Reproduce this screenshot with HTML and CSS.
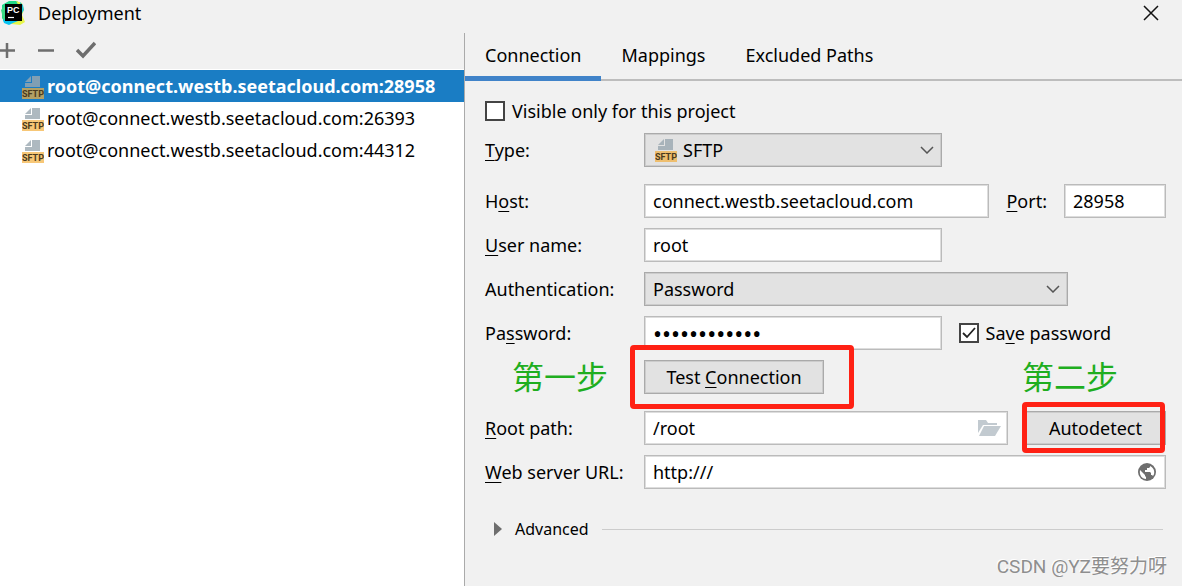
FILE: index.html
```html
<!DOCTYPE html>
<html lang="en">
<head>
    <meta charset="UTF-8">
    <meta name="viewport" content="width=device-width, initial-scale=1.0">
    <title>Deployment</title>
    <link rel="stylesheet" href="styles.css">
</head>
<body>
    <header class="title-bar">
        <svg class="app-icon" viewBox="0 0 24 24">
            <path d="M1 4L8 0H16L20 4L12 16L4 22L1 17Z" fill="#21d789"/>
            <path d="M0 9L6 3V21L3 21Z" fill="#3ddc84"/>
            <path d="M15 0L21 2L23 9L21 14L24 21L19 24L11 23L7 20L18 5Z" fill="#e6f54a"/>
            <path d="M19 1L22 4L23 9L20 14Z" fill="#21c8d8"/>
            <path d="M2 19L8 17L17 20L12 22L8 24L3 22Z" fill="#07c3f2"/>
            <rect x="4" y="3" width="17" height="17" fill="#000"/>
            <text x="6" y="12" class="app-icon-text">PC</text>
            <path d="M7 16.500H13" stroke="#fff" stroke-width="1.200"/>
        </svg>
        <h1>Deployment</h1>
        <button class="close-btn" aria-label="Close">
            <svg width="16" height="16" viewBox="0 0 16 16"><path d="M1 1L15 15M15 1L1 15" stroke="#111" stroke-width="1.500"/></svg>
        </button>
    </header>

    <main class="dialog">
        <aside class="sidebar">
            <div class="toolbar">
                <button aria-label="Add"><svg width="20" height="20" viewBox="0 0 20 20"><path d="M11 3V18M3 10.500H19" stroke="#6e6e6e" stroke-width="2.500"/></svg></button>
                <button aria-label="Remove"><svg width="20" height="20" viewBox="0 0 20 20"><path d="M2 10.500H18" stroke="#6e6e6e" stroke-width="2.500"/></svg></button>
                <button aria-label="Use as default"><svg width="20" height="20" viewBox="0 0 20 20"><path d="M1 10L7 16L19 3" fill="none" stroke="#6e6e6e" stroke-width="3.500"/></svg></button>
            </div>
            <ul class="server-list">
                <li class="selected">
                    <svg class="sftp-icon" viewBox="0 0 22 23"><path d="M3 6L9 0V6Z"/><path d="M10 0H18V11H3V7H10Z"/><rect y="12" width="22" height="11"/><text x="11" y="21">SFTP</text></svg>
                    root@connect.westb.seetacloud.com:28958
                </li>
                <li>
                    <svg class="sftp-icon" viewBox="0 0 22 23"><path d="M3 6L9 0V6Z"/><path d="M10 0H18V11H3V7H10Z"/><rect y="12" width="22" height="11"/><text x="11" y="21">SFTP</text></svg>
                    root@connect.westb.seetacloud.com:26393
                </li>
                <li>
                    <svg class="sftp-icon" viewBox="0 0 22 23"><path d="M3 6L9 0V6Z"/><path d="M10 0H18V11H3V7H10Z"/><rect y="12" width="22" height="11"/><text x="11" y="21">SFTP</text></svg>
                    root@connect.westb.seetacloud.com:44312
                </li>
            </ul>
        </aside>

        <section class="settings">
            <nav class="tabs">
                <button class="tab active">Connection</button>
                <button class="tab">Mappings</button>
                <button class="tab">Excluded Paths</button>
            </nav>

            <form class="connection-form">
                <label class="check-label"><input type="checkbox">Visible only for this project</label>

                <div class="row row-last">
                    <label class="row-label" for="type"><u>T</u>ype:</label>
                    <div class="select-wrap medium with-icon">
                        <svg class="sftp-icon" viewBox="0 0 22 23"><path d="M3 6L9 0V6Z"/><path d="M10 0H18V11H3V7H10Z"/><rect y="12" width="22" height="11"/><text x="11" y="21">SFTP</text></svg>
                        <select id="type"><option>SFTP</option></select>
                        <svg class="chevron" viewBox="0 0 14 8"><path d="M1 1L7 7L13 1"/></svg>
                    </div>
                </div>

                <div class="row">
                    <label class="row-label" for="host">H<u>o</u>st:</label>
                    <div class="fields">
                        <input type="text" id="host" class="grow" value="connect.westb.seetacloud.com">
                        <label for="port"><u>P</u>ort:</label>
                        <input type="text" id="port" class="port" value="28958">
                    </div>
                </div>

                <div class="row">
                    <label class="row-label" for="username"><u>U</u>ser name:</label>
                    <div class="fields"><input type="text" id="username" class="medium" value="root"></div>
                </div>

                <div class="row">
                    <label class="row-label" for="auth">Authentication:</label>
                    <div class="select-wrap large">
                        <select id="auth"><option>Password</option></select>
                        <svg class="chevron" viewBox="0 0 14 8"><path d="M1 1L7 7L13 1"/></svg>
                    </div>
                </div>

                <div class="row">
                    <label class="row-label" for="password">Pa<u>s</u>sword:</label>
                    <div class="fields">
                        <input type="password" id="password" class="medium" value="abcdefghijkl">
                        <label class="check-label"><input type="checkbox" checked><span>Sa<u>v</u>e password</span></label>
                    </div>
                </div>

                <div class="row row-last">
                    <span class="row-label step">第一步</span>
                    <div class="fields">
                        <div class="marked marked-test"><button type="button" class="test-btn">Test <u>C</u>onnection</button></div>
                        <span class="step step-two">第二步</span>
                    </div>
                </div>

                <div class="row">
                    <label class="row-label" for="rootpath"><u>R</u>oot path:</label>
                    <div class="fields">
                        <div class="input-wrap">
                            <input type="text" id="rootpath" value="/root">
                            <svg class="input-icon" viewBox="0 0 24 18"><path d="M1 1H9L11 4H20V6H6L1 14Z" fill="#9aa7b0" fill-opacity="0.6"/><path d="M7 7H24L18 17H2Z" fill="#9aa7b0" fill-opacity="0.6"/></svg>
                        </div>
                        <div class="marked marked-detect"><button type="button" class="detect-btn">Autodetect</button></div>
                    </div>
                </div>

                <div class="row">
                    <label class="row-label" for="url"><u>W</u>eb server URL:</label>
                    <div class="fields">
                        <div class="input-wrap">
                            <input type="text" id="url" value="http:///">
                            <svg class="input-icon" viewBox="0 0 24 18"><circle cx="12" cy="9" r="9" fill="#6e6e6e"/><path d="M5 7L10 12V13L11 14V16C7 16 4 12 5 7ZM15 3C20 5 20 11 18 13L17 12H16V10L15 9H10V7H12V5H14L15 4Z" fill="#fff"/></svg>
                        </div>
                    </div>
                </div>
            </form>

            <button class="advanced"><svg width="8" height="14" viewBox="0 0 8 14"><path d="M0 0L8 7L0 14Z" fill="#6e6e6e"/></svg>Advanced</button>
        </section>
    </main>

    <div class="watermark">CSDN @YZ要努力呀</div>
</body>
</html>
```

FILE: styles.css
```css
* {
    box-sizing: border-box;
}

body {
    margin: 0;
    min-height: 100vh;
    display: flex;
    flex-direction: column;
    position: relative;
    background-color: #f1f1f1;
    color: #000;
    font-family: "Noto Sans", "Noto Sans CJK SC", sans-serif;
    font-size: 18px;
    line-height: 24px;
}

button, input, select {
    font: inherit;
    color: inherit;
}

button {
    padding: 0;
    border: none;
    background: none;
}

svg {
    display: block;
    flex-shrink: 0;
}

u {
    text-underline-offset: 3px;
}

.sftp-icon {
    width: 22px;
    height: 23px;
}

.sftp-icon path {
    fill: #9aa7b0;
    fill-opacity: 0.8;
}

.sftp-icon rect {
    fill: #f4af3d;
    fill-opacity: 0.7;
}

.sftp-icon text {
    font: bold 9px Roboto, sans-serif;
    text-anchor: middle;
    fill: #4b3a20;
}

/* Title bar */
.title-bar {
    display: flex;
    align-items: center;
    height: 33px;
    padding: 0 23px 7px 1px;
}

.title-bar h1 {
    flex: 1;
    margin: 0 0 0 13px;
    font-size: 18px;
    font-weight: normal;
}

.app-icon {
    width: 24px;
    height: 24px;
}

.app-icon-text {
    font: bold 9px "Liberation Sans", sans-serif;
    fill: #fff;
}

.dialog {
    flex: 1;
    display: flex;
}

/* Server list */
.sidebar {
    flex: 0 0 465px;
    display: flex;
    flex-direction: column;
    border-right: 1px solid #aaa;
}

.toolbar {
    display: flex;
    gap: 20px;
    height: 37px;
    padding-bottom: 2px;
    margin-left: -4px;
    border-bottom: 1px solid #fff;
}

.server-list {
    flex: 1;
    margin: 0;
    padding: 0;
    list-style: none;
    background-color: #fff;
}

.server-list li {
    display: flex;
    align-items: center;
    gap: 3px;
    height: 32px;
    padding-left: 22px;
    white-space: nowrap;
}

.server-list .sftp-icon {
    margin-top: 2px;
}

.server-list .selected {
    background-color: #1a7dc4;
    color: #fff;
    font-weight: bold;
}

/* Tabs */
.settings {
    flex: 1;
    min-width: 0;
}

.tabs {
    display: flex;
    height: 48px;
    border-bottom: 2px solid #bdbdbd;
}

.tab {
    height: 48px;
    padding: 0 20px;
    border-bottom: 5px solid transparent;
}

.tab.active {
    border-bottom-color: #4083c9;
}

/* Form */
.connection-form {
    display: flex;
    flex-direction: column;
    gap: 10px;
    padding: 18px 16px 0 20px;
}

.row {
    display: flex;
    align-items: center;
    height: 34px;
}

.row-last {
    margin-bottom: 7px;
}

.row-label {
    flex: 0 0 159px;
}

.fields {
    flex: 1;
    min-width: 0;
    display: flex;
    align-items: center;
    gap: 17px;
}

input[type="text"], input[type="password"] {
    width: 100%;
    min-width: 0;
    height: 34px;
    padding: 0 8px;
    border: 1px solid #bbb;
    box-shadow: inset 0 0 0 1px #ddd;
    background-color: #fff;
}

input[type="password"] {
    font-size: 24px;
}

input.medium {
    width: 57%;
}

input.port {
    width: 102px;
}

input.grow {
    flex: 1;
}

.check-label {
    display: flex;
    align-items: center;
    gap: 7px;
}

input[type="checkbox"] {
    appearance: none;
    width: 20px;
    height: 20px;
    margin: 0;
    border: 2px solid #444;
    background-color: #fff;
}

input[type="checkbox"]:checked {
    background-image: url("data:image/svg+xml,%3Csvg xmlns='http://www.w3.org/2000/svg' viewBox='0 0 16 16'%3E%3Cpath d='M2 8L6 12L14 3' fill='none' stroke='%23222' stroke-width='1.8'/%3E%3C/svg%3E");
}

.select-wrap {
    position: relative;
}

.select-wrap.medium {
    width: 298px;
}

.select-wrap.large {
    width: 424px;
}

select {
    appearance: none;
    display: block;
    width: 100%;
    height: 34px;
    padding: 0 30px 0 8px;
    border: 1px solid #aaa;
    border-radius: 0;
    box-shadow: inset 0 0 0 1px #ccc;
    background-color: #e2e2e2;
}

.with-icon select {
    padding-left: 38px;
}

.select-wrap .sftp-icon {
    position: absolute;
    left: 11px;
    top: 6px;
}

.chevron {
    position: absolute;
    right: 8px;
    top: 13px;
    width: 14px;
    height: 8px;
}

.chevron path {
    fill: none;
    stroke: #555;
    stroke-width: 1.5;
}

.input-wrap {
    position: relative;
    flex: 1;
}

.input-icon {
    position: absolute;
    right: 7px;
    top: 8px;
    width: 24px;
    height: 18px;
}

.test-btn, .detect-btn {
    display: block;
    width: 180px;
    height: 34px;
    border: 1px solid #aaa;
    box-shadow: inset 0 0 0 1px #ccc;
    background-color: #e2e2e2;
}

.detect-btn {
    width: 141px;
}

/* Step marks */
.step {
    font-size: 32px;
    line-height: 34px;
    color: #1fae1f;
}

.row-label.step {
    padding-left: 27px;
}

.step-two {
    margin-left: auto;
    margin-right: 48px;
}

.marked {
    position: relative;
}

.marked::after {
    content: "";
    position: absolute;
    border: 5px solid #ff2114;
    border-radius: 4px;
    pointer-events: none;
}

.marked-test::after {
    inset: -15px -30px -15px -14px;
}

.marked-detect::after {
    inset: -9px 1px -8px -3px;
}

/* Advanced */
.advanced {
    display: flex;
    align-items: center;
    width: 100%;
    margin-top: 28px;
    padding: 0 19px 0 29px;
    gap: 13px;
    font-size: 16px;
}

.advanced::after {
    content: "";
    flex: 1;
    height: 1px;
    background-color: #ccc;
}

.watermark {
    position: absolute;
    right: 15px;
    bottom: 7px;
    font-family: Roboto, "Noto Sans CJK SC", sans-serif;
    font-size: 19px;
    color: #8e8e8e;
    text-shadow: -1px -1px 0 #fff;
}
```
